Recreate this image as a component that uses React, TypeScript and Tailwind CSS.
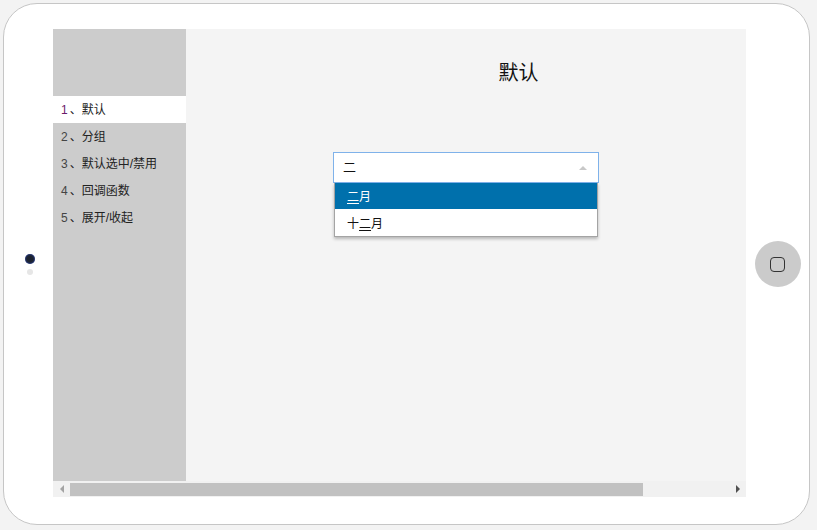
import { useState } from 'react'

const menu = ['默认', '分组', '默认选中/禁用', '回调函数', '展开/收起']

const cjk = { fontFamily: '"Liberation Sans", "Noto Sans CJK SC", sans-serif' }

export default function App() {
  const [active] = useState(0)

  return (
    <div className="h-[530px] w-[817px] bg-[#f3f3f3] pl-[3px] pt-[3px]" style={cjk}>
      <div className="flex h-[522px] w-[807px] rounded-[34px] border border-[#c6c6c6] bg-white">
        {/* camera */}
        <div className="flex w-[49px] flex-col items-center justify-center gap-[5px] pl-[3px]">
          <div className="h-[10px] w-[10px] rounded-full bg-[#1c2230] shadow-[inset_0_0_2px_#3b5bd8]" />
          <div className="h-[6px] w-[6px] rounded-full bg-[#e6e6e6]" />
        </div>

        {/* screen */}
        <div className="mt-[25px] flex h-[468px] w-[693px] flex-col overflow-hidden bg-[#f4f4f4]">
          <div className="flex h-[452px]">
            <div className="w-[133px] shrink-0 bg-[#cccccc] pt-[67px]">
              {menu.map((label, i) => (
                <div
                  key={label}
                  className={`flex h-[27px] items-center pl-[8px] text-[12px] text-[#222] ${i === active ? 'h-[26px] bg-white' : ''}`}
                >
                  <span className={i === active ? 'text-[#6a1b6a]' : 'text-[#444]'}>{i + 1}</span>
                  <span className="ml-[2px]">、{label}</span>
                </div>
              ))}
            </div>

            <div className="w-[665px] shrink-0 pt-[30px]">
              <h1 className="text-center text-[20px] font-normal leading-[28px] text-[#111]">默认</h1>

              <div className="relative ml-[147px] mt-[65px] w-[266px]">
                <div className="flex h-[31px] items-center justify-between border border-[#7fb2ea] bg-white pl-[9px] pr-[11px] pt-[1px] text-[13px] text-[#111]">
                  <span>二</span>
                  <span className="h-0 w-0 border-x-[4px] border-b-[4px] border-x-transparent border-b-[#c8c8c8]" />
                </div>
                <div className="mx-[1px] border border-t-0 border-[#a4a4a4] bg-white text-[12px] shadow-[0_2px_3px_rgba(0,0,0,0.25)]">
                  <div className="flex h-[26px] items-center bg-[#0070ac] pl-[12px] pt-[2px] text-white">
                    <span className="underline underline-offset-2">二</span>月
                  </div>
                  <div className="flex h-[27px] items-center pl-[12px] pt-[2px] text-[#111]">
                    十<span className="underline underline-offset-2">二</span>月
                  </div>
                </div>
              </div>
            </div>
          </div>

          {/* horizontal scrollbar */}
          <div className="flex h-[16px] items-center bg-[#f1f1f1]">
            <div className="flex w-[17px] justify-center">
              <span className="h-0 w-0 border-y-[4px] border-r-[4px] border-y-transparent border-r-[#a3a3a3]" />
            </div>
            <div className="h-[13px] w-[573px] bg-[#c1c1c1]" />
            <div className="flex-1" />
            <div className="flex w-[16px] justify-center">
              <span className="h-0 w-0 border-y-[4px] border-l-[4px] border-y-transparent border-l-[#505050]" />
            </div>
          </div>
        </div>

        {/* home button */}
        <div className="flex flex-1 items-center justify-center">
          <div className="flex h-[46px] w-[46px] items-center justify-center rounded-full bg-[#cbcbcb]">
            <div className="h-[15px] w-[15px] rounded-[4px] border-[1.5px] border-[#333]" />
          </div>
        </div>
      </div>
    </div>
  )
}
